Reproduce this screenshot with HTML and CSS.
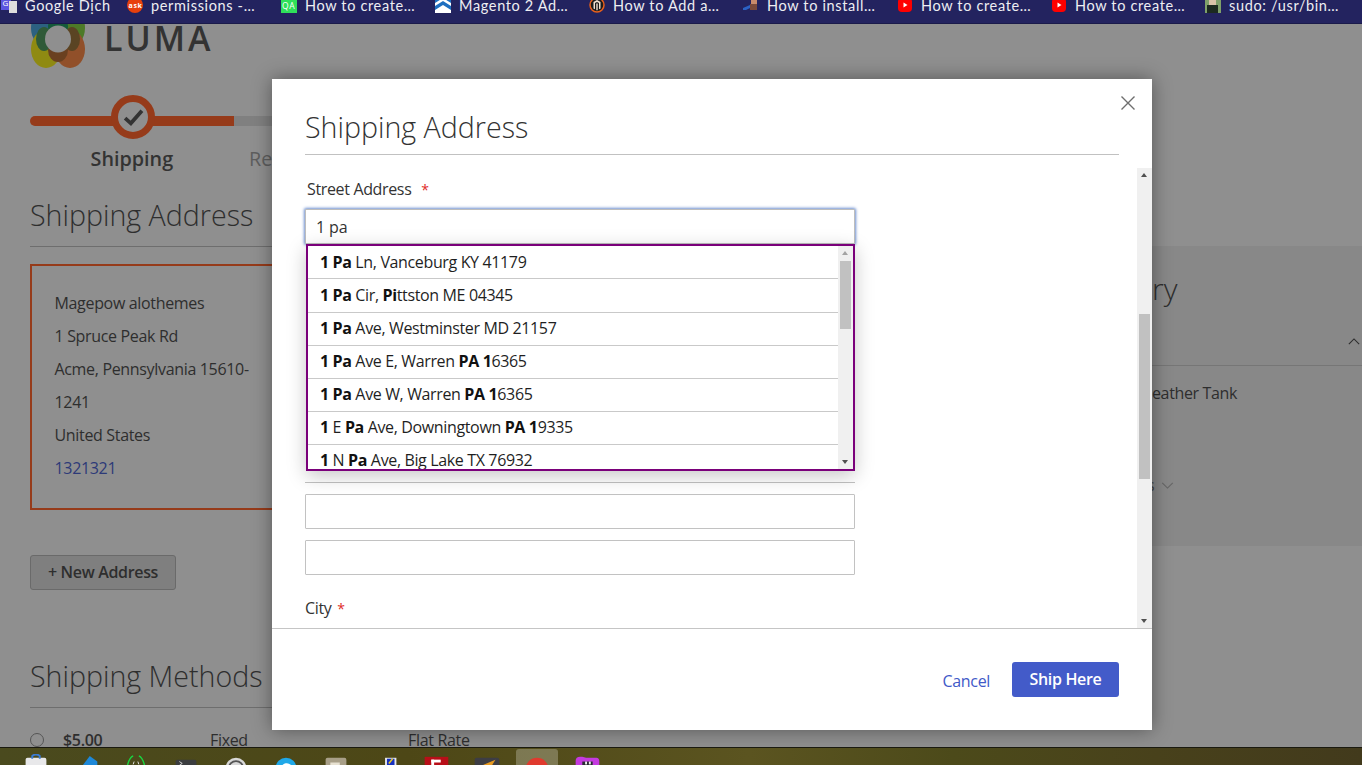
FILE: index.html
```html
<!DOCTYPE html>
<html lang="en">
<head>
<meta charset="utf-8">
<title>Checkout</title>
<link rel="stylesheet" href="styles.css">
</head>
<body>
<nav class="bookmarks">
  <a class="bm bm-1"><svg class="fav" viewBox="0 0 16 16"><rect width="10" height="13" fill="#5b55e0"/><rect x="8" y="4" width="8" height="12" fill="#ddd"/><text x="1.5" y="9" font-size="8" fill="#fff" font-family="Open Sans">G</text></svg>Google Dịch</a>
  <a class="bm bm-2"><svg class="fav" viewBox="0 0 16 16"><circle cx="8" cy="8" r="8" fill="#e8400c"/><text x="1.5" y="10.5" font-size="7" font-weight="700" fill="#fff" font-family="Open Sans">ask</text></svg>permissions -…</a>
  <a class="bm bm-3"><svg class="fav" viewBox="0 0 16 16"><rect width="16" height="16" fill="#2fe05a"/><text x="1" y="11.5" font-size="8.5" fill="#fff" font-family="Open Sans">QA</text></svg>How to create…</a>
  <a class="bm bm-4"><svg class="fav" viewBox="0 0 16 16"><rect width="16" height="16" fill="#1e6fc0"/><path d="M0 6 8 1l8 5v3L8 4 0 9zM0 16v-3l8-5 8 5v3z" fill="#fff"/></svg>Magento 2 Ad…</a>
  <a class="bm bm-5"><svg class="fav" viewBox="0 0 16 16"><circle cx="8" cy="8" r="7" fill="#1b1b1b" stroke="#e8601c" stroke-width="1.5"/><path d="M4.5 11.5V5L8 3l3.500 2v6.500L10 12.300V6L8 5 6 6v6.300zM7.300 6.500h1.400v6.800H7.300z" fill="#f0e0d0"/></svg>How to Add a…</a>
  <a class="bm bm-6"><svg class="fav" viewBox="0 0 16 16"><path d="M0 11l7-3v3l-4 2H0z" fill="#2b62c4"/><rect x="8" y="1" width="6" height="6" fill="#c98b6b"/><rect x="8" y="1" width="6" height="2" fill="#4a2a1a"/><rect x="7" y="7" width="7" height="6" fill="#7a4a3a"/></svg>How to install…</a>
  <a class="bm bm-7"><svg class="fav" viewBox="0 0 16 16"><rect x="1" y="1" width="14" height="14" rx="4" fill="#f00"/><path d="M6.500 5.500v5l4-2.500z" fill="#fff"/></svg>How to create…</a>
  <a class="bm bm-8"><svg class="fav" viewBox="0 0 16 16"><rect x="1" y="1" width="14" height="14" rx="4" fill="#f00"/><path d="M6.500 5.500v5l4-2.500z" fill="#fff"/></svg>How to create…</a>
  <a class="bm bm-9"><svg class="fav" viewBox="0 0 16 16"><rect width="16" height="16" fill="#7fa06a"/><rect x="4" y="2" width="7" height="6" fill="#d9c2a8"/><rect x="2" y="8" width="11" height="8" fill="#1c2a20"/></svg>sudo: /usr/bin…</a>
</nav>

<main class="page">
  <div class="col-left">
    <div class="logo">
      <svg class="logo-mark" viewBox="0 0 56 60"><ellipse cx="16" cy="19" rx="15" ry="19" fill="#2c6181"/><ellipse cx="40" cy="19" rx="15" ry="19" fill="#4d7a28"/><ellipse cx="16" cy="40" rx="15" ry="19" fill="#8f8a12"/><ellipse cx="40" cy="40" rx="15" ry="19" fill="#91502a"/><ellipse cx="28" cy="18" rx="10" ry="12" fill="#155a3a"/><ellipse cx="28" cy="41" rx="10" ry="12" fill="#6a4020"/><ellipse cx="14" cy="30" rx="8" ry="12" fill="#2f5a38"/><ellipse cx="42" cy="30" rx="8" ry="12" fill="#5a4423"/><ellipse cx="28" cy="30" rx="13" ry="13.500" fill="#8f8f8f"/></svg>
      <span class="logo-text">LUMA</span>
    </div>
    <div class="steps">
      <div class="step-track"><div class="step-fill"></div><div class="step-rest"></div></div>
      <div class="step-dot"><svg viewBox="0 0 20 20" class="check"><path d="M2 10.500l5.500 5L18 3.500" fill="none" stroke="#333" stroke-width="3.600"/></svg></div>
      <div class="step-labels"><span class="step-on">Shipping</span><span class="step-off">Review &amp; Payments</span></div>
    </div>
    <h2 class="section-title">Shipping Address</h2>
    <div class="address">
      <p>Magepow alothemes</p>
      <p>1 Spruce Peak Rd</p>
      <p>Acme, Pennsylvania 15610-<br>1241</p>
      <p>United States</p>
      <p class="phone">1321321</p>
    </div>
    <button class="new-address">+ New Address</button>
    <h2 class="section-title methods">Shipping Methods</h2>
    <div class="method"><span class="radio"></span><b>$5.00</b><span class="m-fixed">Fixed</span><span class="m-flat">Flat Rate</span></div>
  </div>

  <aside class="summary">
    <div class="summary-title">ry</div>
    <svg class="chev-up" viewBox="0 0 14 8"><path d="M1 7l6-6 6 6" fill="none" stroke="#2e2e2e" stroke-width="1.300"/></svg>
    <div class="summary-item">eather Tank</div>
    <div class="summary-more"><span class="more-s">s</span><svg class="chev-down" viewBox="0 0 14 8"><path d="M1 1l6 6 6-6" fill="none" stroke="#666" stroke-width="1.200"/></svg></div>
  </aside>

  <section class="modal">
    <header class="modal-head">
      <h1>Shipping Address</h1>
      <svg class="close" viewBox="0 0 14 14"><path d="M.5.500l13 13M13.500.500l-13 13" stroke="#6e6e6e" stroke-width="1.400" fill="none"/></svg>
    </header>
    <div class="modal-body">
      <form class="form">
        <label class="lbl lbl-street">Street Address <em>*</em></label>
        <div class="field-wrap">
          <div class="input focus">1 pa</div>
          <div class="dropdown">
            <ul class="results">
              <li><b>1 Pa</b> Ln, Vanceburg KY 41179</li>
              <li><b>1 Pa</b> Cir, <b>Pi</b>ttston ME 04345</li>
              <li><b>1 Pa</b> Ave, Westminster MD 21157</li>
              <li><b>1 Pa</b> Ave E, Warren <b>PA 1</b>6365</li>
              <li><b>1 Pa</b> Ave W, Warren <b>PA 1</b>6365</li>
              <li><b>1</b> E <b>Pa</b> Ave, Downingtown <b>PA 1</b>9335</li>
              <li><b>1</b> N <b>Pa</b> Ave, Big Lake TX 76932</li>
            </ul>
            <div class="sb sb-inner"><i class="arrow up faint"></i><div class="thumb thumb-inner"></div><i class="arrow down"></i></div>
          </div>
        </div>
        <div class="input plain"></div>
        <div class="input plain"></div>
        <label class="lbl lbl-city">City <em>*</em></label>
      </form>
      <div class="sb sb-outer"><i class="arrow up"></i><div class="thumb thumb-outer"></div><i class="arrow down"></i></div>
    </div>
    <footer class="modal-foot">
      <a class="cancel">Cancel</a>
      <button class="ship">Ship Here</button>
    </footer>
  </section>
</main>

<footer class="dock">
  <svg class="di" viewBox="0 0 28 18"><rect x="3" y="4" width="22" height="18" rx="2" fill="#e8e8ea"/><path d="M10 5V2q4-3 8 0v3" fill="none" stroke="#3a7bd5" stroke-width="2"/></svg>
  <svg class="di" viewBox="0 0 28 18"><path d="M18 2l8 6v10H6z" fill="#1e88d8"/></svg>
  <svg class="di" viewBox="0 0 28 18"><path d="M4 17Q6 4 11 2M24 17Q22 4 17 2" fill="none" stroke="#19d641" stroke-width="1.500"/><path d="M12 8l-1 3M16 8l1 3" stroke="#e8e8e8" stroke-width="1"/></svg>
  <svg class="di" viewBox="0 0 28 18"><rect x="3" y="6" width="22" height="18" rx="2" fill="#3b3d3f"/><path d="M7 8l3 2-3 2" fill="none" stroke="#ddd"/></svg>
  <svg class="di" viewBox="0 0 28 18"><circle cx="14" cy="15" r="11" fill="#d8d8d8"/><circle cx="14" cy="15" r="7.500" fill="none" stroke="#555" stroke-width="2"/></svg>
  <svg class="di" viewBox="0 0 28 18"><circle cx="14" cy="15" r="11" fill="#1fa8e8"/><path d="M9 15q5-7 10-2" stroke="#fff" stroke-width="2.500" fill="none"/></svg>
  <svg class="di" viewBox="0 0 28 18"><path d="M3 6q0-2 2-2h18q2 0 2 2v14H3z" fill="#a89f88"/><rect x="8" y="9" width="10" height="3" fill="#e8e2d2"/></svg>
  <svg class="di" viewBox="0 0 28 18"><rect x="13" y="4" width="12" height="17" fill="#e8e8e8"/><rect x="15" y="5" width="8" height="14" fill="#1530c0"/><path d="M17 10l4-5" stroke="#f0d020" stroke-width="1.500"/></svg>
  <svg class="di" viewBox="0 0 28 18"><rect x="2" y="3" width="25" height="19" fill="#b80f18"/><rect x="9" y="6" width="10" height="3" fill="#fff"/><rect x="9" y="6" width="3" height="12" fill="#fff"/></svg>
  <svg class="di" viewBox="0 0 28 18"><rect x="2" y="4" width="26" height="18" rx="2" fill="#3d3d44"/><path d="M10 12l14-6-6 10z" fill="#e89a20"/></svg>
  <span class="dock-active"><svg class="di" viewBox="0 0 28 18"><circle cx="14" cy="17" r="12" fill="#e03a2e"/></svg></span>
  <svg class="di" viewBox="0 0 28 18"><path d="M2 7q0-5 7-4l4 1h11q3 0 3 4v12H2z" fill="#c43adf"/><rect x="9" y="8" width="11" height="10" fill="#2a2a32"/><rect x="12" y="8" width="2" height="3" fill="#eee"/><rect x="16" y="8" width="2" height="3" fill="#eee"/></svg>
</footer>
</body>
</html>
```
FILE: styles.css
```css
* { box-sizing: border-box; }
html, body { margin: 0; height: 765px; overflow: hidden; }
body { display: flex; flex-direction: column; font-family: "Open Sans", "Noto Sans", sans-serif; color: #2e2e2e; background: #8f8f8f; }

.bookmarks { height: 24px; flex: none; display: flex; background: #23235f; border-bottom: 1px solid #1a1a4a; color: #eeeef2; font: 14.5px/10px "Lato", "Open Sans", sans-serif; overflow: hidden; }
.bm { display: flex; align-items: center; gap: 8px; width: 154px; padding-left: 6px; height: 10px; margin-top: 1px; white-space: nowrap; letter-spacing: .65px; flex: none; }
.bm-1 { width: 122px; padding-left: 1px; }
.bm-2 { width: 153px; padding-left: 5px; }
.fav { width: 16px; height: 16px; flex: none; margin-top: -3px; }

.page { position: relative; flex: 1; min-height: 0; overflow: hidden; background: #8f8f8f; padding-left: 30px; }
.col-left { width: 300px; }

.logo { display: flex; align-items: flex-start; gap: 18px; height: 77px; margin-top: -15px; }
.logo-mark { width: 56px; height: 60px; flex: none; }
.logo-text { font: 600 34px/1 "Open Sans", sans-serif; letter-spacing: 3px; color: #333; margin-top: 12px; }

.steps { position: relative; height: 103px; margin-top: 1px; }
.step-track { display: flex; width: 300px; height: 10px; margin-top: 29px; position: absolute; top: 0; left: 0; }
.step-fill { width: 204px; background: #963b1a; border-radius: 5px 0 0 5px; }
.step-rest { flex: 1; background: #808080; }
.step-dot { position: absolute; left: 81px; top: 8px; width: 44px; height: 44px; border: 7px solid #963b1a; border-radius: 50%; background: #8f8f8f; display: flex; align-items: center; justify-content: center; }
.check { width: 21px; height: 21px; }
.step-labels { position: absolute; left: 0; top: 59px; width: 300px; display: flex; font-size: 19.800px; line-height: 26px; white-space: nowrap; }
.step-on { flex: none; width: 219px; padding-left: 60.500px; font-weight: 600; color: #333; }
.step-off { flex: none; color: #5e5e5e; }

.section-title { margin: 0; font-weight: 300; font-size: 28.600px; line-height: 36px; color: #2e2e2e; border-bottom: 1px solid #6e6e6e; height: 57px; padding-top: 7px; white-space: nowrap; }
.address { margin-top: 17px; height: 246px; border: 2px solid #963b1a; padding: 21px 0 0 22.500px; font-size: 16px; letter-spacing: -.33px; line-height: 33px; color: #2e2e2e; }
.address p { margin: 0; }
.phone { color: #2d3a78; }
.new-address { display: block; margin-top: 45px; width: 146px; height: 35px; padding: 0 0 2px; border: 1px solid #6a6a6a; border-radius: 3px; background: #7f7f7f; color: #2e2e2e; font: 600 16px/1 "Open Sans", sans-serif; letter-spacing: -.33px; }
.methods { margin-top: 61px; }
.method { position: relative; display: flex; align-items: center; margin-top: 17px; height: 30px; font-size: 16px; letter-spacing: -.33px; white-space: nowrap; }
.radio { flex: none; width: 14px; height: 14px; border: 1px solid #555; border-radius: 50%; margin-right: 19px; }
.method b { flex: none; font-weight: 600; width: 147px; }
.m-fixed { flex: none; width: 198px; color: #2e2e2e; }
.m-flat { flex: none; color: #2e2e2e; }

.summary { position: absolute; left: 1152px; top: 222px; width: 210px; height: 300px; background: #888888; }
.summary-title { font-weight: 300; font-size: 30px; height: 120px; padding-top: 25px; line-height: 36px; border-bottom: 1px solid #767676; }
.chev-up { position: absolute; right: 2px; top: 92px; width: 12px; height: 7px; }
.summary-item { font-size: 16px; letter-spacing: -.36px; line-height: 20px; margin-top: 17px; }
.summary-more { display: flex; align-items: center; font-size: 16px; line-height: 20px; margin-top: 72px; color: #444; }
.more-s { margin-left: -5px; width: 14px; }
.chev-down { width: 13px; height: 7px; }

.modal { position: absolute; left: 272px; top: 55px; width: 880px; height: 651px; background: #fff; box-shadow: 0 0 18px rgba(0,0,0,.4); display: flex; flex-direction: column; }
.modal-head { position: relative; height: 89px; flex: none; padding: 0 33px; }
.modal-head h1 { margin: 0; height: 76px; padding-top: 28px; font-weight: 300; font-size: 28.600px; line-height: 40px; color: #333; border-bottom: 1px solid #c1c1c1; }
.close { position: absolute; right: 17px; top: 17px; width: 14px; height: 14px; }
.modal-body { flex: 1; min-height: 0; display: flex; justify-content: space-between; overflow: hidden; }
.form { width: 583px; padding-left: 33px; }
.lbl { display: block; font-size: 16px; letter-spacing: -.35px; line-height: 20px; color: #333; }
.lbl em { font-style: normal; color: #e02b27; margin-left: 6px; font-size: 14px; }
.lbl-street { padding-left: 2px; margin-top: 11px; height: 30px; }
.lbl-city { margin-top: 23px; }
.lbl-city em { margin-left: 2px; }
.field-wrap { position: relative; height: 285px; }
.input { height: 35px; border: 1px solid #c2c2c2; border-radius: 1px; background: #fff; font-size: 16px; letter-spacing: -.1px; line-height: 35px; padding-left: 10px; color: #333; }
.input.focus { border: 1px solid #bdbdbd; box-shadow: 0 0 3px 1px #6d8fd0; }
.plain { width: 550px; margin-bottom: 11px; }
.plain:last-of-type { margin-bottom: 0; }
.field-wrap::after { content: ""; position: absolute; left: 0; right: 0; top: 273px; border-bottom: 1px solid #c2c2c2; }
.dropdown { position: absolute; left: 1px; top: 35px; width: 549px; height: 227px; border: 2px solid #7a007a; background: #fff; display: flex; box-shadow: 0 5px 18px rgba(0,0,0,.22); overflow: hidden; z-index: 2; }
.results { list-style: none; margin: 0; padding: 0; flex: 1; min-width: 0; overflow: hidden; font-size: 16px; letter-spacing: -.36px; color: #1f1f1f; }
.results li { height: 33px; line-height: 30px; padding-left: 12px; border-bottom: 1px solid #c9c9c9; white-space: nowrap; }
.results li:nth-child(1), .results li:nth-child(2) { line-height: 32px; }
.results li:nth-child(2) { height: 34px; }
.results b { font-weight: 700; color: #111; }

.sb { flex: none; position: relative; width: 15px; background: #f0f0f0; display: flex; flex-direction: column; }
.thumb { position: absolute; left: 2px; width: 11px; background: #c1c1c1; }
.thumb-inner { top: 15px; height: 68px; }
.thumb-outer { top: 146px; height: 165px; }
.arrow { position: absolute; left: 4px; width: 0; height: 0; border-left: 3.500px solid transparent; border-right: 3.500px solid transparent; }
.arrow.up { top: 5px; border-bottom: 4px solid #505050; }
.arrow.down { bottom: 5px; border-top: 4px solid #505050; }
.arrow.faint { border-bottom-color: #a3a3a3; }

.modal-foot { flex: none; height: 102px; border-top: 1px solid #c5c5c5; display: flex; align-items: flex-start; justify-content: flex-end; padding: 33px 33px 0 0; gap: 22px; }
.cancel { font-size: 16px; letter-spacing: -.33px; line-height: 36px; margin-top: 1px; color: #4159c8; }
.ship { width: 107px; height: 35px; border: 0; border-radius: 3px; background: #435bc9; color: #fff; font: 600 16px/1 "Open Sans", sans-serif; letter-spacing: -.33px; padding: 0 0 2px; }

.dock { height: 18px; flex: none; display: flex; padding-left: 22px; border-top: 1px solid #1a1a10; background: linear-gradient(90deg, #4a4a1e 0%, #4d4716 30%, #5b5420 55%, #4c4a1a 70%, #48411b 85%, #423a1c 100%); overflow: hidden; gap: 22px; }
.di { width: 28px; height: 17px; flex: none; margin-top: 6px; }
.dock-active { flex: none; width: 42px; height: 20px; margin: 1px -7px 0 -6px; background: rgba(255,255,255,.25); border-radius: 3px 3px 0 0; display: flex; justify-content: center; }
.dock-active .di { margin-top: 4px; }
```
